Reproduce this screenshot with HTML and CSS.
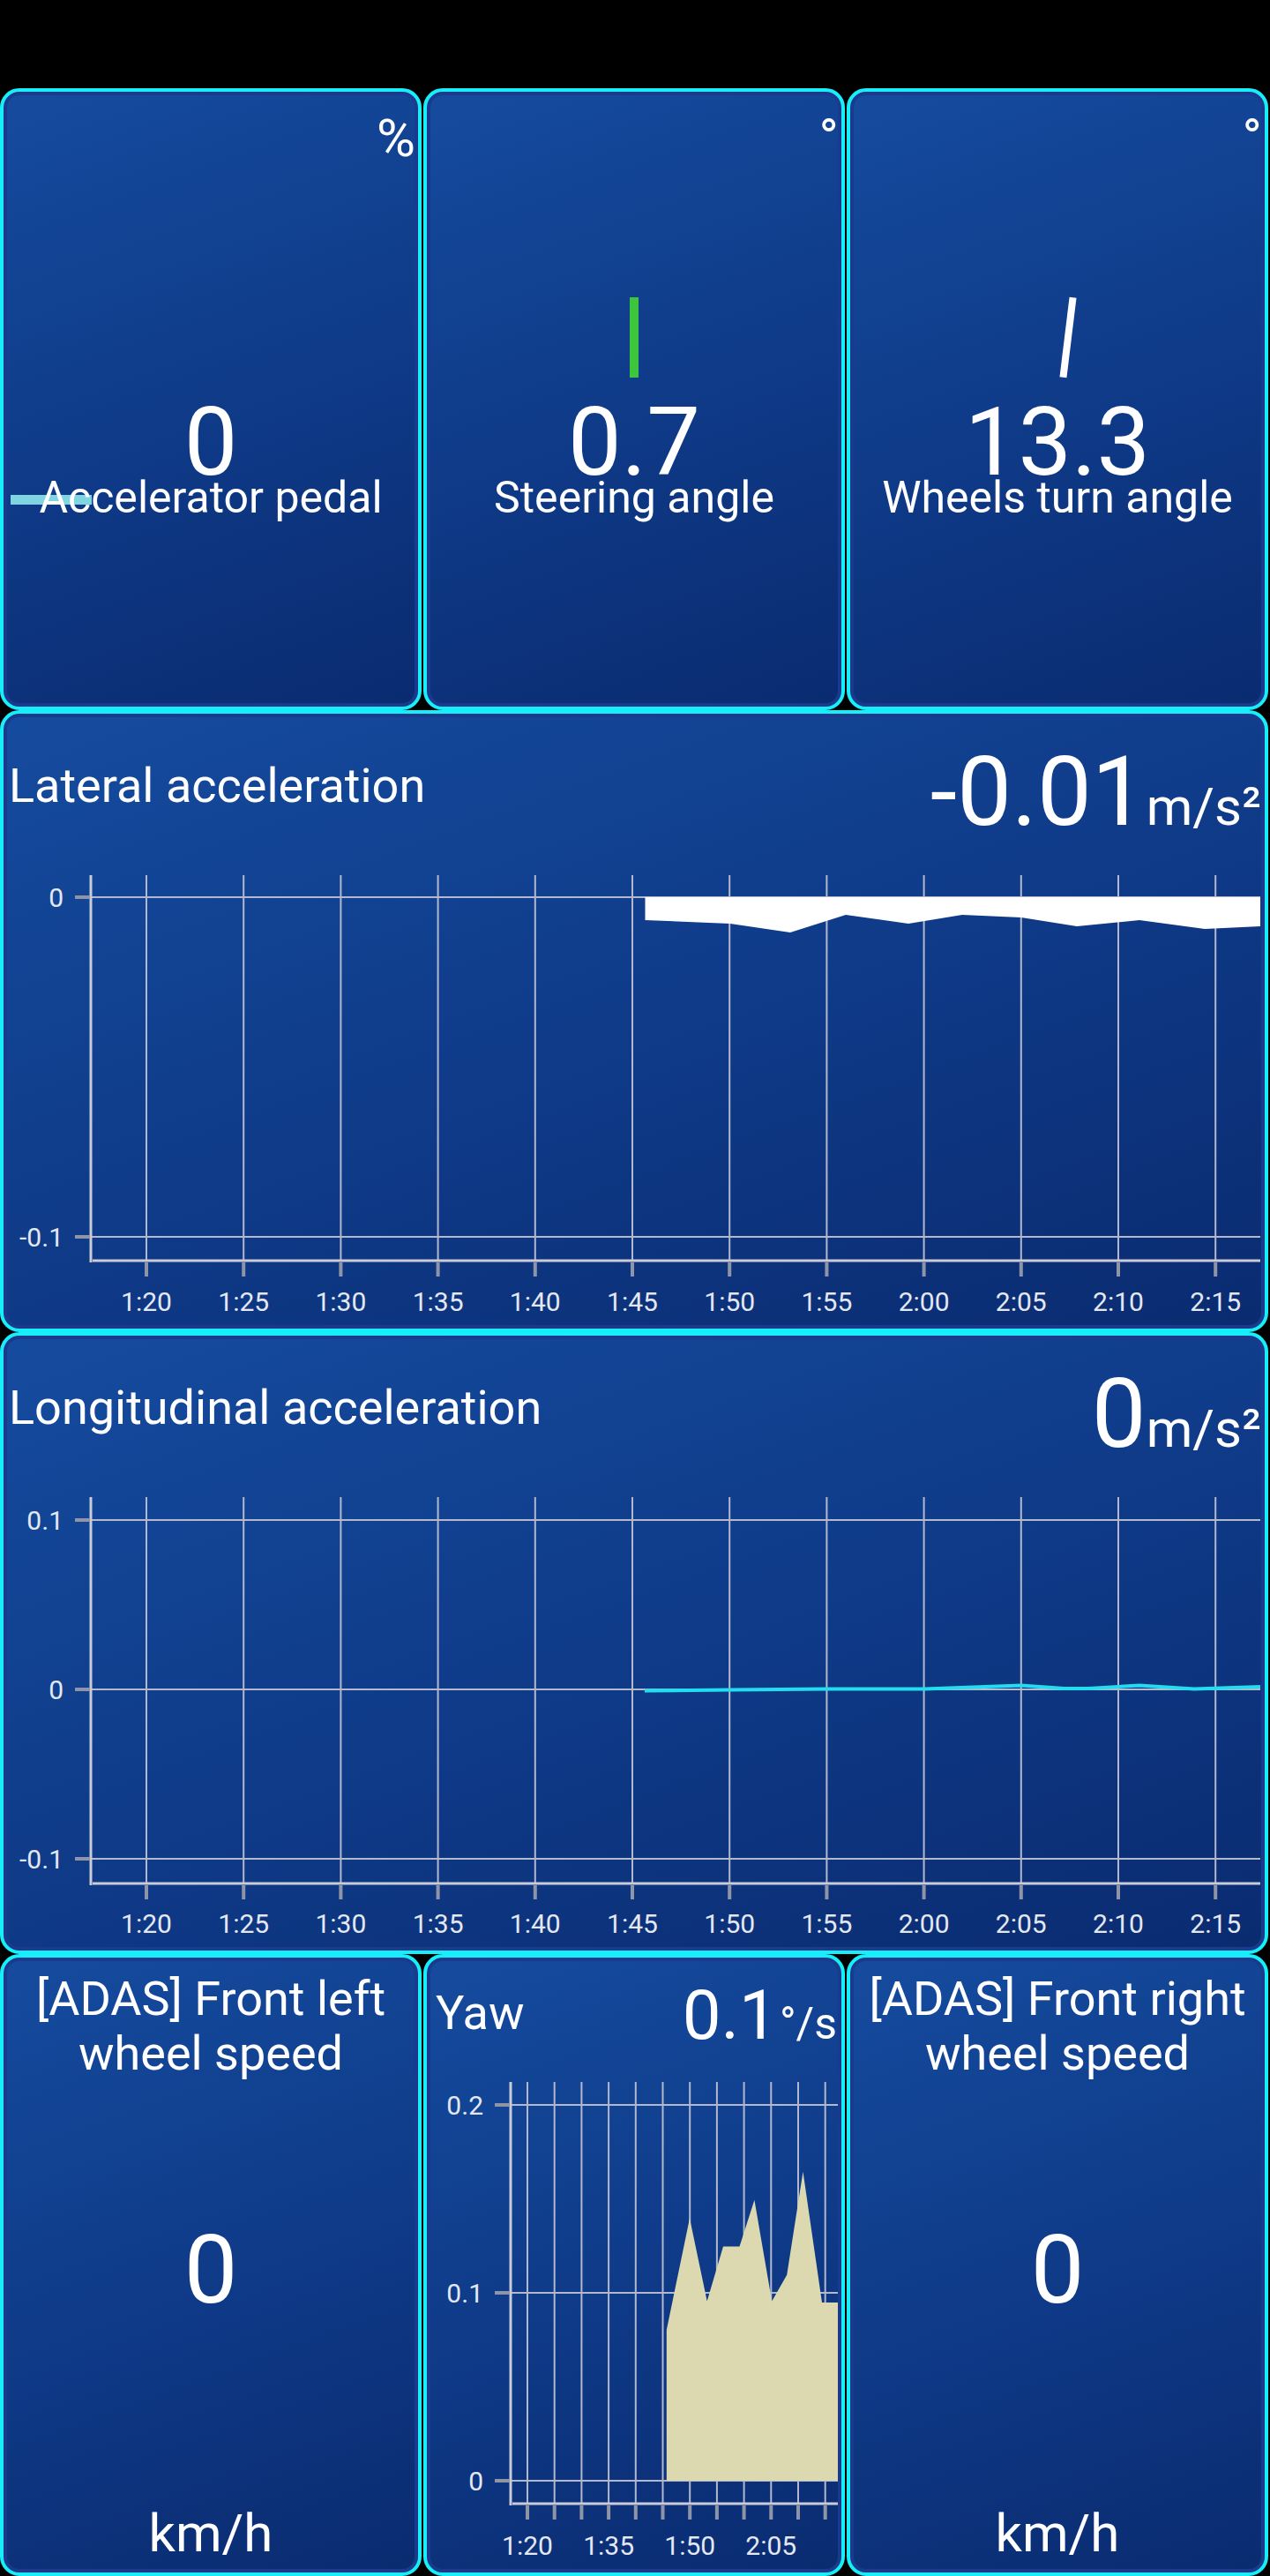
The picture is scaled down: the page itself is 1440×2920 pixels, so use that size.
FILE: index.html
```html
<!DOCTYPE html>
<html lang="en">
<head>
  <meta charset="UTF-8" />
  <meta name="viewport" content="width=device-width, initial-scale=1" />
  <title>Vehicle dashboard</title>
  <link rel="stylesheet" href="styles.css">
</head>
<body>
  <div class="dash">

    <!-- Row 1: gauges -->
    <div class="row">
      <div class="tile gauge-tile">
        <span class="corner-unit">%</span>
        <div class="hbar"></div>
        <div class="gauge"></div>
        <div class="big-value">0</div>
        <div class="tile-label">Accelerator pedal</div>
      </div>
      <div class="tile gauge-tile">
        <span class="corner-unit">°</span>
        <div class="gauge"><div class="gauge-bar"></div></div>
        <div class="big-value">0.7</div>
        <div class="tile-label">Steering angle</div>
      </div>
      <div class="tile gauge-tile">
        <span class="corner-unit">°</span>
        <div class="gauge"><div class="needle"></div></div>
        <div class="big-value">13.3</div>
        <div class="tile-label">Wheels turn angle</div>
      </div>
    </div>

    <!-- Row 2 -->
    <div class="tile chart-tile">
      <div class="chart-head">
        <div class="chart-title">Lateral acceleration</div>
        <div class="chart-value">-0.01<span class="chart-unit">m/s²</span></div>
      </div>
      <svg class="chart" id="latChart" width="1430" height="551" viewBox="0 0 1430 551"></svg>
    </div>

    <!-- Row 3 -->
    <div class="tile chart-tile">
      <div class="chart-head">
        <div class="chart-title">Longitudinal acceleration</div>
        <div class="chart-value">0<span class="chart-unit">m/s²</span></div>
      </div>
      <svg class="chart" id="lonChart" width="1430" height="551" viewBox="0 0 1430 551"></svg>
    </div>

    <!-- Row 4 -->
    <div class="row">
      <div class="tile speed-tile">
        <div class="speed-title">[ADAS] Front left<br>wheel speed</div>
        <div class="big-value speed-value">0</div>
        <div class="speed-unit">km/h</div>
      </div>
      <div class="tile chart-tile">
        <div class="yaw-head">
          <div class="yaw-title">Yaw</div>
          <div class="yaw-value">0.1<span class="yaw-unit">°/s</span></div>
        </div>
        <svg class="chart" id="yawChart" width="470" height="571" viewBox="0 0 470 571"></svg>
      </div>
      <div class="tile speed-tile">
        <div class="speed-title">[ADAS] Front right<br>wheel speed</div>
        <div class="big-value speed-value">0</div>
        <div class="speed-unit">km/h</div>
      </div>
    </div>

  </div>

  <script>
    const NS = 'http://www.w3.org/2000/svg';
    const times = ['1:20', '1:25', '1:30', '1:35', '1:40', '1:45', '1:50', '1:55', '2:00', '2:05', '2:10', '2:15'];

    function add(svg, name, attrs, text) {
      const node = document.createElementNS(NS, name);
      for (const k in attrs) node.setAttribute(k, attrs[k]);
      if (text !== undefined) node.textContent = text;
      svg.appendChild(node);
      return node;
    }

    function drawChart(id, c) {
      const svg = document.getElementById(id);

      // grid
      times.forEach((t, i) => {
        const x = c.x0 + i * c.step;
        add(svg, 'line', { x1: x, y1: c.top, x2: x, y2: c.axisY, class: 'grid' });
      });
      c.levels.forEach(l => {
        add(svg, 'line', { x1: c.axisX, y1: l.y, x2: c.right, y2: l.y, class: 'grid' });
      });

      // data
      if (c.area) add(svg, 'polygon', { points: c.area, class: c.areaClass });
      if (c.line) add(svg, 'polyline', { points: c.line, class: c.lineClass });

      // axes
      add(svg, 'line', { x1: c.axisX, y1: c.top, x2: c.axisX, y2: c.axisY + 2, class: 'axis' });
      add(svg, 'line', { x1: c.axisX + 2, y1: c.axisY, x2: c.right, y2: c.axisY, class: 'axis' });

      // ticks + labels
      times.forEach((t, i) => {
        const x = c.x0 + i * c.step;
        add(svg, 'line', { x1: x, y1: c.axisY + 2, x2: x, y2: c.axisY + 18, class: 'tick' });
        if (i % c.every === 0) {
          add(svg, 'text', { x: x, y: c.labelY, 'text-anchor': 'middle' }, t);
        }
      });
      c.levels.forEach(l => {
        add(svg, 'line', { x1: c.axisX - 18, y1: l.y, x2: c.axisX - 1, y2: l.y, class: 'tick' });
        add(svg, 'text', { x: c.axisX - 31, y: l.y + 11, 'text-anchor': 'end' }, l.label);
      });
    }

    drawChart('latChart', {
      x0: 162, step: 110.2, every: 1, top: 37, axisX: 99, axisY: 474, right: 1425, labelY: 531,
      levels: [{ y: 62, label: '0' }, { y: 447, label: '-0.1' }],
      area: '727.5,62 727.5,88 824,92 892,102 955,82 1026,92 1087,82 1154,85 1217,95 1288,88 1362,98 1425,95 1425,62',
      areaClass: 'area-white'
    });

    drawChart('lonChart', {
      x0: 162, step: 110.2, every: 1, top: 37, axisX: 99, axisY: 475, right: 1425, labelY: 531,
      levels: [{ y: 63, label: '0.1' }, { y: 255, label: '0' }, { y: 447, label: '-0.1' }],
      line: '727,256.5 824,255.5 934,254.6 1044,254.6 1154,250.5 1203,254 1230,254 1288,250.5 1350,254.6 1425,252',
      lineClass: 'line-cyan'
    });

    drawChart('yawChart', {
      x0: 114, step: 30.7, every: 3, top: 15, axisX: 95, axisY: 493, right: 466, labelY: 551,
      levels: [{ y: 41, label: '0.2' }, { y: 254, label: '0.1' }, { y: 467, label: '0' }],
      area: '271.8,467 271.8,296 298,169.5 317.7,263.6 336,201.6 354.5,201.6 371.4,148.8 391.2,263.6 408.2,233.8 426.5,116.7 448,265 466,265 466,467',
      areaClass: 'area-sand'
    });
  </script>
</body>
</html>
```

FILE: styles.css
```css
body {
  margin: 0;
  padding: 0;
  background: #000;
  color: #fff;
  font-family: Roboto, 'Noto Sans', sans-serif;
}

.dash {
  width: 1438px;
  padding-top: 100px;
  display: grid;
  grid-template-rows: repeat(4, 705px);
}

.row {
  display: grid;
  grid-template-columns: repeat(3, 1fr);
  column-gap: 2px;
}

.tile {
  position: relative;
  box-sizing: border-box;
  border: 4px solid #17eefa;
  border-radius: 22px;
  background: linear-gradient(160deg, #154b9e 0%, #0f3b89 50%, #0a2b70 100%);
  box-shadow: inset 0 0 0 4px #1b3a8b;
  overflow: hidden;
}

/* top gauges */
.gauge-tile {
  display: flex;
  flex-direction: column;
  align-items: center;
}

.corner-unit {
  position: absolute;
  top: 23px;
  right: 3px;
  font-size: 60px;
  line-height: 60px;
}

.gauge {
  height: 91px;
  margin-top: 233px;
  display: flex;
  justify-content: center;
}

.gauge-bar {
  width: 10px;
  height: 91px;
  background: #3dc63d;
}

.needle {
  width: 8px;
  height: 91px;
  background: #fff;
  transform: translateX(12px) rotate(7deg);
}

.hbar {
  position: absolute;
  left: 8px;
  top: 457px;
  width: 92px;
  height: 11px;
  background: #7fd6e2;
}

.big-value {
  font-size: 108px;
  line-height: 108px;
  margin-top: 19px;
}

.tile-label {
  position: relative;
  font-size: 50px;
  line-height: 50px;
  margin-top: -16px;
}

/* charts */
.chart-tile {
  display: flex;
  flex-direction: column;
}

.chart-head {
  height: 146px;
  flex-shrink: 0;
  display: flex;
  justify-content: space-between;
  align-items: flex-start;
  padding: 0 4px 0 6px;
}

.chart-title {
  font-size: 54px;
  line-height: 54px;
  margin-top: 55px;
}

.chart-value {
  font-size: 110px;
  line-height: 110px;
  margin-top: 34px;
}

.chart-unit {
  font-size: 60px;
  line-height: 1;
}

.chart {
  display: block;
  flex-shrink: 0;
}

.chart text {
  font-family: Roboto, 'Noto Sans', sans-serif;
  font-size: 30px;
  fill: #e4e8f2;
}

.grid {
  stroke: #b3b8cc;
  stroke-width: 2;
}

.axis {
  stroke: #c9ccd8;
  stroke-width: 3;
}

.tick {
  stroke: #8f94a6;
  stroke-width: 4;
}

.area-white {
  fill: #fff;
}

.area-sand {
  fill: #dcd9b1;
}

.line-cyan {
  fill: none;
  stroke: #22dcef;
  stroke-width: 4;
}

/* yaw */
.yaw-head {
  height: 126px;
  flex-shrink: 0;
  display: flex;
  justify-content: space-between;
  align-items: flex-start;
  padding: 0 5px 0 10px;
}

.yaw-title {
  font-size: 54px;
  line-height: 54px;
  margin-top: 36px;
}

.yaw-value {
  font-size: 78px;
  line-height: 78px;
  margin-top: 27px;
}

.yaw-unit {
  font-size: 50px;
  line-height: 1;
  margin-left: 2px;
}

/* wheel speeds */
.speed-tile {
  display: flex;
  flex-direction: column;
  align-items: center;
  text-align: center;
}

.speed-title {
  font-size: 54px;
  line-height: 62px;
  margin-top: 16px;
}

.speed-value {
  margin-top: 160px;
}

.speed-unit {
  font-size: 60px;
  line-height: 60px;
  margin-top: auto;
  margin-bottom: 14px;
}
```
